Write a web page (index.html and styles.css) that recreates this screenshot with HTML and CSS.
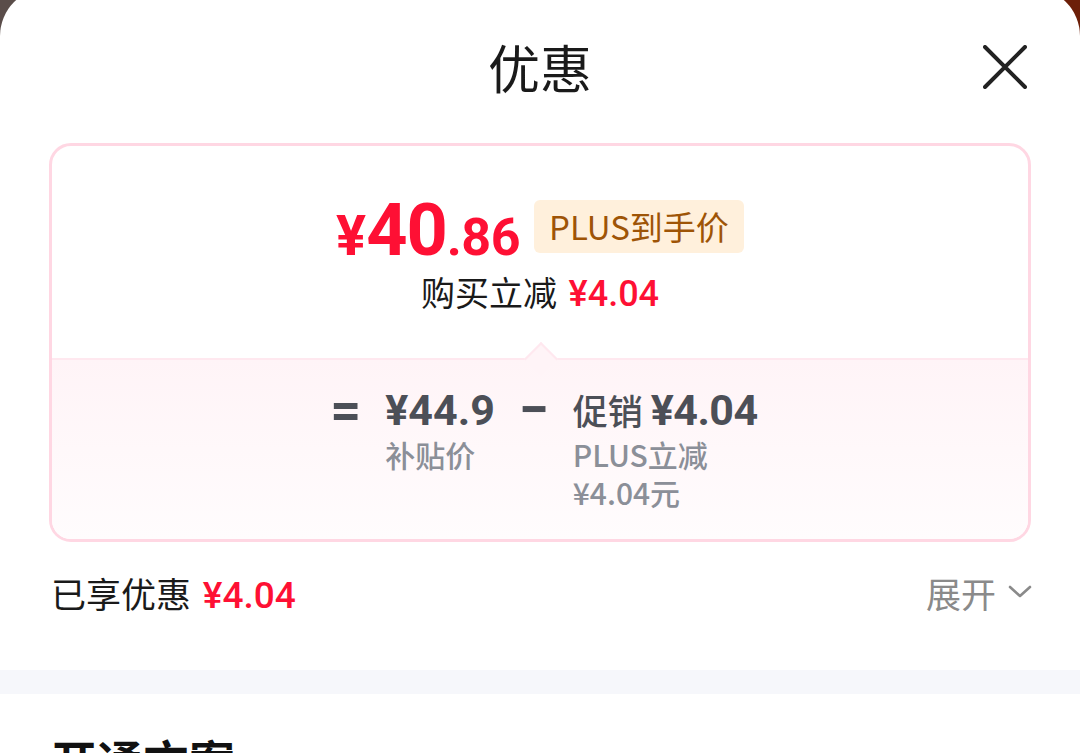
FILE: index.html
```html
<!DOCTYPE html>
<html lang="zh-CN">
<head>
    <meta charset="UTF-8">
    <meta name="viewport" content="width=device-width, initial-scale=1.0">
    <title>优惠</title>
    <link rel="stylesheet" href="styles.css">
</head>
<body>

<div class="sheet">
    <div class="header">
        <span></span>
        <h1>优惠</h1>
        <button class="close-btn" aria-label="关闭">
            <svg width="44" height="44" viewBox="0 0 44 44">
                <path d="M2 2 L42 42 M42 2 L2 42" stroke="#222" stroke-width="4" stroke-linecap="round" fill="none"/>
            </svg>
        </button>
    </div>

    <div class="card">
        <div class="card-top">
            <div class="price-row">
                <span class="price"><span class="yen">¥</span><span class="int">40</span><span class="dec">.86</span></span>
                <span class="badge">PLUS到手价</span>
            </div>
            <div class="save-line">购买立减 <span class="red num">¥4.04</span></div>
        </div>
        <div class="card-bottom">
            <span class="notch"></span>
            <div class="formula">
                <div class="op">=</div>
                <div class="term">
                    <div class="amount num">¥44.9</div>
                    <div class="note">补贴价</div>
                </div>
                <div class="op">−</div>
                <div class="term">
                    <div class="amount">促销 <span class="num tight">¥4.04</span></div>
                    <div class="note">PLUS立减</div>
                    <div class="note">¥4.04元</div>
                </div>
            </div>
        </div>
    </div>

    <div class="summary">
        <div class="summary-left">已享优惠 <span class="red num">¥4.04</span></div>
        <div class="expand">展开
            <svg width="24" height="14" viewBox="0 0 24 14">
                <path d="M2 2 L12 11 L22 2" stroke="#8a8a8a" stroke-width="2.6" fill="none" stroke-linecap="round" stroke-linejoin="round"/>
            </svg>
        </div>
    </div>

    <div class="band"></div>

    <div class="section">
        <h2>开通方案</h2>
    </div>
</div>

</body>
</html>
```

FILE: styles.css
```css
body {
    margin: 0;
    padding: 0;
    background: linear-gradient(to right, #5a4d4a 0%, #5a4d4a 50%, #6c1f08 50%, #6c1f08 100%);
    font-family: "Noto Sans CJK SC", "Noto Sans", sans-serif;
    color: #1a1a1a;
    overflow: hidden;
    height: 753px;
}
.sheet {
    margin-top: -12px;
    background-color: #fff;
    border-radius: 48px 48px 0 0;
    height: 765px;
    overflow: hidden;
}
.header {
    display: grid;
    grid-template-columns: 1fr auto 1fr;
    align-items: center;
    padding: 47px 53px 0 53px;
    height: 64px;
}
h1 {
    margin: 0;
    font-size: 52px;
    font-weight: 400;
    line-height: 64px;
    color: #1a1a1a;
}
.close-btn {
    justify-self: end;
    width: 44px;
    height: 44px;
    padding: 0;
    border: none;
    background: none;
    display: flex;
}
.card {
    margin: 44px 49px 0 49px;
    border: 3px solid #ffd7e3;
    border-radius: 22px;
    overflow: hidden;
}
.card-top {
    display: flex;
    flex-direction: column;
    align-items: center;
    padding: 49px 0 41px 0;
}
.num {
    font-family: Roboto, "Noto Sans", sans-serif;
}
.red {
    color: #fe1034;
}
.price-row {
    display: flex;
    align-items: center;
    gap: 14px;
    height: 72px;
}
.price {
    display: block;
    font-family: Roboto, "Noto Sans", sans-serif;
    font-weight: 700;
    font-size: 72px;
    line-height: 72px;
    color: #fe1034;
}
.yen {
    font-size: 56px;
    line-height: 1;
}
.int {
    font-size: 72px;
    letter-spacing: -1px;
    line-height: 1;
}
.dec {
    font-size: 52px;
    letter-spacing: -0.5px;
    line-height: 1;
}
.badge {
    background-color: #fff0dc;
    color: #9e5406;
    font-size: 33px;
    line-height: 53px;
    padding: 0 15px;
    border-radius: 6px;
    margin-bottom: 9px;
}
.save-line {
    font-size: 34px;
    line-height: 46px;
    margin-top: 2px;
    color: #1a1a1a;
}
.save-line .num {
    font-size: 36px;
    font-weight: 500;
    margin-left: 4px;
}
.card-bottom {
    position: relative;
    border-top: 2px solid #ffe8ef;
    background: linear-gradient(to bottom, #fff4f7, #fffcfd);
    padding: 25px 0 28px 0;
}
.notch {
    position: absolute;
    left: 50%;
    top: -13px;
    width: 22px;
    height: 22px;
    margin-left: -11px;
    background-color: #fff4f7;
    border-top: 2px solid #ffe8ef;
    border-left: 2px solid #ffe8ef;
    transform: rotate(45deg);
}
.formula {
    display: flex;
    justify-content: center;
    gap: 24px;
    padding-left: 8px;
}
.op {
    font-family: Roboto, "Noto Sans", sans-serif;
    font-size: 54px;
    font-weight: 700;
    line-height: 50px;
    color: #4c4f57;
}
.term {
    display: flex;
    flex-direction: column;
}
.amount {
    font-size: 35px;
    font-weight: 500;
    line-height: 50px;
    color: #4c4f57;
}
.amount.num, .amount .num {
    font-size: 43px;
    font-weight: 700;
}
.amount .tight {
    letter-spacing: -0.5px;
}
.note {
    font-size: 30px;
    line-height: 38px;
    height: 38px;
    color: #8b8f98;
    font-weight: 500;
}
.summary {
    display: flex;
    justify-content: space-between;
    align-items: center;
    padding: 0 48px 0 51px;
    height: 100px;
}
.summary-left {
    font-size: 35px;
    color: #1a1a1a;
}
.summary-left .num {
    font-size: 37px;
    font-weight: 500;
    margin-left: 4px;
}
.expand {
    display: flex;
    align-items: center;
    gap: 12px;
    font-size: 35px;
    color: #8a8a8a;
}
.band {
    margin-top: 28px;
    height: 24px;
    background-color: #f6f7fb;
}
.section {
    padding: 42px 51px 0 51px;
}
h2 {
    margin: 0;
    font-size: 46px;
    line-height: 46px;
    font-weight: 700;
    color: #111;
}
```
